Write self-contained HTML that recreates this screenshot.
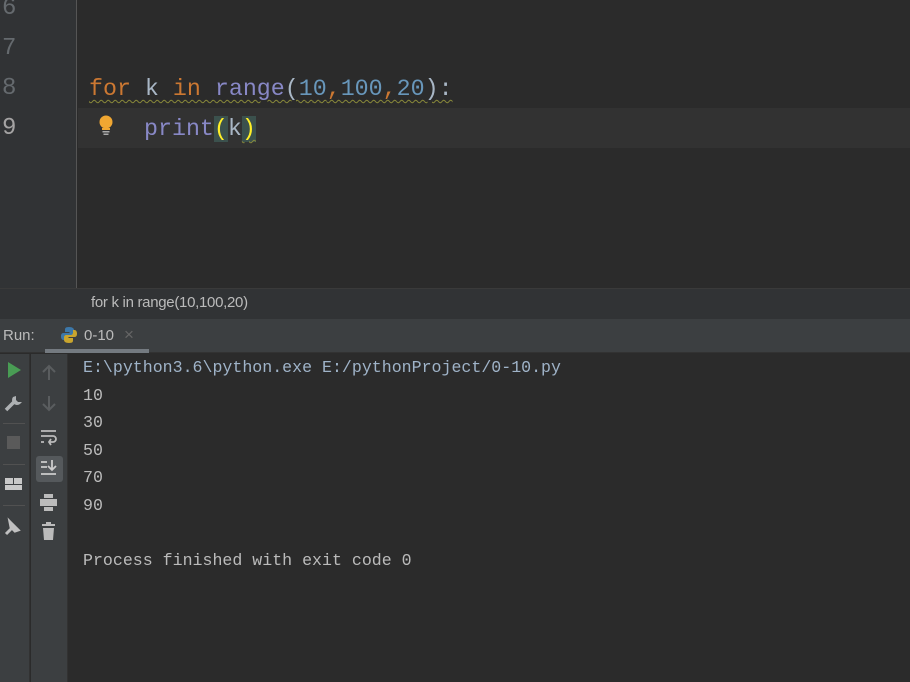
<!DOCTYPE html>
<html><head><meta charset="utf-8"><style>
*{margin:0;padding:0;box-sizing:border-box}
body{width:910px;height:682px;background:#2b2b2b;position:relative;overflow:hidden;font-family:"Liberation Mono",monospace}
.abs{position:absolute}
.gut{left:0;top:0;width:77px;height:288px;background:#313335;border-right:1px solid #555}
.ln{position:absolute;left:2px;font-size:24px;color:#656a6e;font-family:"Liberation Mono",monospace;line-height:40px}
.code{position:absolute;left:89px;font-size:23.3px;line-height:40px;white-space:pre;color:#a9b7c6}
.kw{color:#cc7832}.fn{color:#8888c6}.num{color:#6897bb}
.wavy{text-decoration:underline wavy #8a8a3a;text-decoration-thickness:1px;text-underline-offset:4px}
</style></head><body>
<div class="abs gut"></div>
<div class="abs" style="left:78px;top:108px;width:832px;height:40px;background:#323232"></div>
<div class="ln" style="top:-11px">6</div>
<div class="ln" style="top:29px">7</div>
<div class="ln" style="top:69px">8</div>
<div class="ln" style="top:109px;color:#a4a3a3">9</div>
<div class="code wavy" style="top:69px"><span class="kw">for</span> k <span class="kw">in</span> <span class="fn">range</span>(<span class="num">10</span><span class="kw">,</span><span class="num">100</span><span class="kw">,</span><span class="num">20</span>):</div>
<div class="code" style="top:109px;left:144px"><span class="fn">print</span><span style="background:#3b514d;color:#ffef28">(</span>k<span style="background:#3b514d;color:#ffef28" class="wavy">)</span></div>
<svg class="abs" style="left:97px;top:115px" width="18" height="22" viewBox="0 0 18 22"><circle cx="9" cy="7" r="6.5" fill="#f0a732"/><rect x="5" y="13" width="8" height="2" fill="#f0a732"/><rect x="5.5" y="16" width="7" height="1.5" fill="#aaa"/><rect x="6.5" y="18.5" width="5" height="1.5" fill="#aaa"/></svg>
<div class="abs" style="left:0;top:288px;width:910px;height:31px;background:#313335;border-top:1px solid #3a3a3a"></div>
<div class="abs" style="left:91px;top:294px;font-family:'Liberation Sans',sans-serif;font-size:15px;color:#bbb;letter-spacing:-0.3px">for k in range(10,100,20)</div>
<div class="abs" style="left:0;top:319px;width:910px;height:34px;background:#3c3f41;border-bottom:1px solid #323232"></div>
<div class="abs" style="left:3px;top:327px;font-family:'Liberation Sans',sans-serif;font-size:15px;color:#bbb">Run:</div>
<svg class="abs" style="left:60px;top:326px" width="18" height="18" viewBox="0 0 18 18"><path d="M9 1C5 1 5 2.5 5 4v2h4.5v1H3.5C1.5 7 1 8.5 1 10.5S2 14 3.5 14H5v-2.5C5 10 6 9 7.5 9h4C13 9 14 8 14 6.5V4C14 2.5 12.5 1 9 1z" fill="#3c78aa"/><path d="M9 17c4 0 4-1.5 4-3v-2H8.5v-1h6c2 0 2.5-1.5 2.5-3.5S16 4 14.5 4H13v2.5C13 8 12 9 10.5 9h-4C5 9 4 10 4 11.5V14c0 1.5 1.5 3 5 3z" fill="#c9a52e"/></svg>
<div class="abs" style="left:84px;top:327px;font-family:'Liberation Sans',sans-serif;font-size:15px;color:#bbb">0-10</div>
<div class="abs" style="left:124px;top:325px;font-family:'Liberation Sans',sans-serif;font-size:17px;color:#666">×</div>
<div class="abs" style="left:45px;top:349px;width:104px;height:4px;background:#747a80"></div>
<div class="abs" style="left:0;top:354px;width:30px;height:328px;background:#3c3f41;border-right:1px solid #323232"></div>
<div class="abs" style="left:31px;top:354px;width:37px;height:328px;background:#3c3f41;border-right:1px solid #323232"></div>
<div class="abs" style="left:3px;top:423px;width:22px;height:1px;background:#515151"></div>
<div class="abs" style="left:3px;top:464px;width:22px;height:1px;background:#515151"></div>
<div class="abs" style="left:3px;top:505px;width:22px;height:1px;background:#515151"></div>
<svg class="abs" style="left:0;top:354px" width="68" height="200" viewBox="0 0 68 200">
<path d="M8 8l13 8-13 8z" fill="#499c54"/>
<path d="M6 56l8-8" stroke="#aeb1b3" stroke-width="3.5" fill="none"/><path d="M13 43a5 5 0 0 0 7 7l2-2h-4l-2-2v-4z" fill="#aeb1b3"/>
<rect x="7" y="82" width="13" height="13" fill="#5a5a5a"/>
<rect x="5" y="124" width="8" height="6" fill="#c8c8c8"/><rect x="14" y="124" width="8" height="6" fill="#c8c8c8"/><rect x="5" y="131" width="17" height="5" fill="#c8c8c8"/>
<path d="M6 180l6-6M10 168l8 8-3 1-4-4z" stroke="#c0c0c0" stroke-width="3" fill="#c0c0c0"/>
<path d="M49 26V12M43 18l6-6 6 6" stroke="#5a5d5f" stroke-width="2" fill="none"/>
<path d="M49 42v14M43 50l6 6 6-6" stroke="#5a5d5f" stroke-width="2" fill="none"/>
<path d="M41 77h15M41 82h12a3 3 0 0 1 0 6h-4M51 85l-2 3 2 3M41 88h3" stroke="#bbb" stroke-width="1.8" fill="none"/>
<rect x="36" y="102" width="27" height="26" rx="3" fill="#55595c"/>
<path d="M41 108h6M41 113h6M41 120h15M52 106v10M48 112l4 4 4-4" stroke="#ccc" stroke-width="1.8" fill="none"/>
<rect x="44" y="140" width="9" height="4" fill="#bbb"/><rect x="40" y="145" width="17" height="7" fill="#bbb"/><rect x="44" y="153" width="9" height="4" fill="#bbb"/>
<rect x="42" y="170" width="13" height="2" fill="#bbb"/><rect x="46" y="168" width="5" height="2" fill="#bbb"/><path d="M43 174h11l-1 12h-9z" fill="#bbb"/>
</svg>
<div class="abs" style="left:83px;top:354px;font-size:16.6px;line-height:27.5px;white-space:pre;color:#bbb"><span style="color:#9fb3c8">E:\python3.6\python.exe E:/pythonProject/0-10.py</span>
10
30
50
70
90

Process finished with exit code 0</div>
</body></html>
